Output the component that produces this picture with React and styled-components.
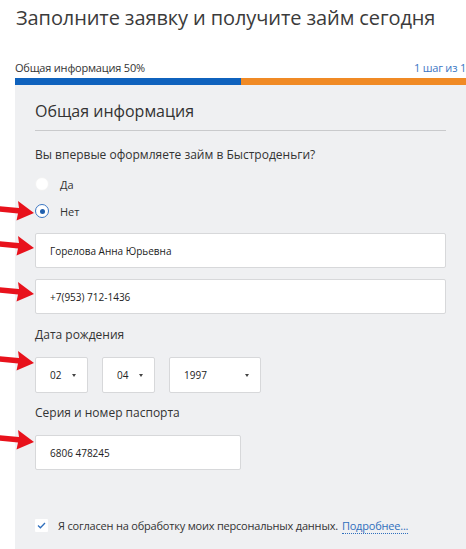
import React from "react";
import styled, { createGlobalStyle } from "styled-components";

const Global = createGlobalStyle`
  html, body { margin: 0; padding: 0; background: #fff; }
  body { font-family: "Open Sans", "Noto Sans", sans-serif; color: #333; }
  * { box-sizing: border-box; }
`;

const Page = styled.div`
  position: relative;
  width: 466px;
  height: 549px;
  overflow: hidden;
  background: #fff;
`;

const Title = styled.h1`
  margin: 0;
  padding: 4px 0 0 16px;
  font-size: 20px;
  line-height: 28px;
  letter-spacing: -0.1px;
  font-weight: 400;
  color: #3b3b3b;
  white-space: nowrap;
`;

const ProgressHead = styled.div`
  display: flex;
  justify-content: space-between;
  align-items: baseline;
  margin: 28px 0 0 15px;
  font-size: 11px;
  line-height: 15px;
  letter-spacing: -0.2px;
  white-space: nowrap;
`;

const StepLabel = styled.span`
  color: #333;
`;

const StepCount = styled.span`
  color: #3a76c4;
`;

const Bar = styled.div`
  display: flex;
  height: 7px;
  margin: 3px 0 0 15px;
`;

const BarPart = styled.div`
  flex: ${(p) => p.$flex};
  background: ${(p) => p.$color};
`;

const Panel = styled.div`
  margin-left: 15px;
  background: #eff0f2;
  padding: 14px 20px 40px 20px;
  min-height: 470px;
`;

const Heading = styled.h2`
  margin: 0;
  font-size: 16px;
  line-height: 24px;
  font-weight: 400;
  color: #333;
  padding-bottom: 7px;
  border-bottom: 1px solid #c9cacc;
`;

const Label = styled.div`
  font-size: 12px;
  line-height: 16px;
  color: #333;
  margin-top: ${(p) => p.$mt || 0}px;
`;

const RadioRow = styled.label`
  display: flex;
  align-items: center;
  gap: 11px;
  height: 14px;
  margin-top: ${(p) => p.$mt}px;
  font-size: 11px;
  color: #333;
`;

const RadioCircle = styled.span`
  position: relative;
  width: 14px;
  height: 14px;
  border-radius: 50%;
  background: #fff;
  border: 1px solid ${(p) => (p.$checked ? "#3a76c4" : "#f2f2f2")};
  &::after {
    content: "";
    display: ${(p) => (p.$checked ? "block" : "none")};
    position: absolute;
    left: 3.5px;
    top: 3.5px;
    width: 5px;
    height: 5px;
    border-radius: 50%;
    background: #1f5fae;
  }
`;

const Input = styled.div`
  display: flex;
  align-items: center;
  height: 35px;
  width: ${(p) => p.$w || "100%"};
  margin-top: ${(p) => p.$mt}px;
  padding-left: 14px;
  background: #fff;
  border: 1px solid #d7d8da;
  border-radius: 2px;
  font-size: 10px;
  color: #222;
`;

const SelectRow = styled.div`
  display: flex;
  gap: 14px;
  margin-top: 14px;
`;

const Select = styled.div`
  display: flex;
  align-items: center;
  justify-content: space-between;
  height: 36px;
  width: ${(p) => p.$w}px;
  padding: 0 11px 0 14px;
  background: #fff;
  border: 1px solid #d7d8da;
  border-radius: 2px;
  font-size: 10px;
  color: #222;
`;

const Caret = styled.span`
  width: 0;
  height: 0;
  border-left: 2px solid transparent;
  border-right: 2px solid transparent;
  border-top: 3px solid #444;
`;

const AgreeRow = styled.div`
  display: flex;
  align-items: center;
  gap: 10px;
  margin-top: 48px;
  font-size: 11px;
  letter-spacing: -0.2px;
  color: #333;
  white-space: nowrap;
`;

const CheckBox = styled.span`
  display: flex;
  align-items: center;
  justify-content: center;
  width: 13px;
  height: 13px;
  background: #fff;
  border-radius: 1px;
`;

const Link = styled.a`
  color: #2f6fbd;
  text-decoration: none;
  border-bottom: 1px dotted #2f6fbd;
  margin-left: 4px;
`;

const Arrow = styled.svg`
  position: absolute;
  left: 0;
  top: ${(p) => p.$top}px;
  width: 36px;
  height: 20px;
  overflow: visible;
`;

const RedArrow = ({ top }) => (
  <Arrow $top={top} viewBox="0 0 36 20">
    <path d="M-2 5 L19 7 L18 0 L34 12 L16.5 19.5 L18 12.5 L-2 10.5 Z" fill="#e8121c" />
  </Arrow>
);

export default function App() {
  return (
    <Page>
      <Global />
      <Title>Заполните заявку и получите займ сегодня</Title>
      <ProgressHead>
        <StepLabel>Общая информация 50%</StepLabel>
        <StepCount>1 шаг из 1</StepCount>
      </ProgressHead>
      <Bar>
        <BarPart $flex={226} $color="#0f62bd" />
        <BarPart $flex={225} $color="#f08a25" />
      </Bar>
      <Panel>
        <Heading>Общая информация</Heading>
        <Label $mt={16}>Вы впервые оформляете займ в Быстроденьги?</Label>
        <RadioRow $mt={14}>
          <RadioCircle />
          Да
        </RadioRow>
        <RadioRow $mt={13}>
          <RadioCircle $checked />
          Нет
        </RadioRow>
        <Input $mt={15}>Горелова Анна Юрьевна</Input>
        <Input $mt={11}>+7(953) 712-1436</Input>
        <Label $mt={13}>Дата рождения</Label>
        <SelectRow>
          <Select $w={53}>
            02
            <Caret />
          </Select>
          <Select $w={53}>
            04
            <Caret />
          </Select>
          <Select $w={92}>
            1997
            <Caret />
          </Select>
        </SelectRow>
        <Label $mt={12}>Серия и номер паспорта</Label>
        <Input $mt={14} $w="206px">6806 478245</Input>
        <AgreeRow>
          <CheckBox>
            <svg width="9" height="7" viewBox="0 0 9 7">
              <path d="M1 3.6 L3.4 5.8 L8 1" fill="none" stroke="#2f6fbd" strokeWidth="1.3" />
            </svg>
          </CheckBox>
          <span>
            Я согласен на обработку моих персональных данных.
            <Link>Подробнее...</Link>
          </span>
        </AgreeRow>
      </Panel>
      <RedArrow top={201} />
      <RedArrow top={236} />
      <RedArrow top={282} />
      <RedArrow top={351} />
      <RedArrow top={430} />
    </Page>
  );
}
